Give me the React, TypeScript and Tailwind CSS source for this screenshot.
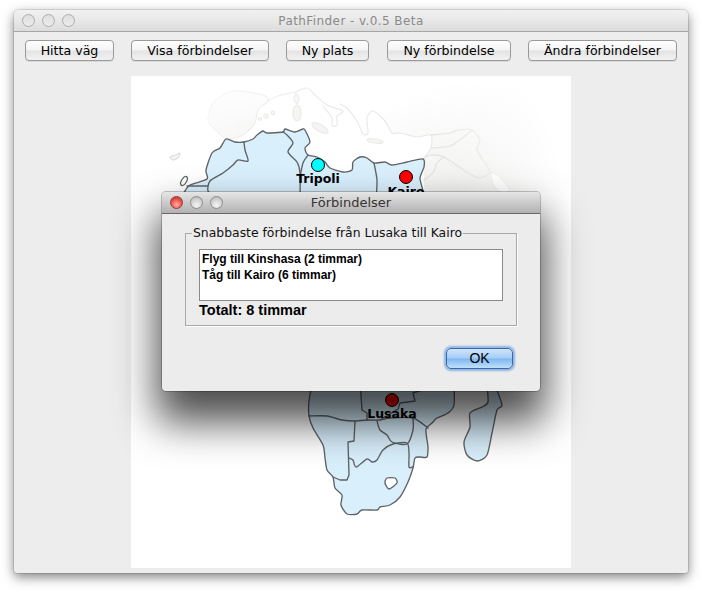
import React from "react";

const stroke = "#5f6366";

function smooth(pts: string, closed = false): string {
  const p = pts.trim().split(/\s+/).map(Number);
  const a: [number, number][] = [];
  for (let i = 0; i + 1 < p.length; i += 2) a.push([p[i], p[i + 1]]);
  const n = a.length;
  const at = (i: number) => (closed ? a[(i + n) % n] : a[Math.max(0, Math.min(n - 1, i))]);
  const k = 0.13;
  let d = `M${a[0][0]} ${a[0][1]}`;
  const last = closed ? n : n - 1;
  for (let i = 0; i < last; i++) {
    const p0 = at(i - 1);
    const p1 = at(i);
    const p2 = at(i + 1);
    const p3 = at(i + 2);
    const c1x = p1[0] + (p2[0] - p0[0]) * k;
    const c1y = p1[1] + (p2[1] - p0[1]) * k;
    const c2x = p2[0] - (p3[0] - p1[0]) * k;
    const c2y = p2[1] - (p3[1] - p1[1]) * k;
    d += `C${c1x.toFixed(1)} ${c1y.toFixed(1)} ${c2x.toFixed(1)} ${c2y.toFixed(1)} ${p2[0]} ${p2[1]}`;
  }
  return closed ? d + "Z" : d;
}

function Light({ color }: { color: "gray" | "red" | "blank" }) {
  const cls =
    color === "red"
      ? "border-[#8f3a3a] bg-[radial-gradient(circle_at_50%_70%,#ffb0a8_0%,#f05a52_50%,#c22a2a_100%)]"
      : color === "gray"
      ? "border-[#8e8e8e] bg-[radial-gradient(circle_at_50%_75%,#f4f4f4_0%,#d0d0d0_60%,#a8a8a8_100%)]"
      : "border-[#adadad] bg-[linear-gradient(#dedede,#ececec)]";
  return <div className={`w-[13px] h-[13px] rounded-full border ${cls}`} />;
}

function ToolButton({ label, width }: { label: string; width: string }) {
  return (
    <button
      className={`${width} h-[21px] rounded-[4px] border border-[#9a9a9a] bg-[linear-gradient(#ffffff,#f4f4f4_45%,#e4e4e4_55%,#f2f2f2)] text-[12.6px] leading-[19px] text-black font-['DejaVu_Sans',sans-serif] shadow-[0_1px_0_rgba(0,0,0,0.08)]`}
    >
      {label}
    </button>
  );
}

function MapDrawing() {
  return (
    <svg viewBox="131 76 440 492" width="440" height="492" className="block">
      <defs>
        <linearGradient id="wash" gradientUnits="userSpaceOnUse" x1="400" y1="100" x2="440" y2="195">
          <stop offset="0" stopColor="#ffffff" />
          <stop offset="1" stopColor="#f1f1f0" />
        </linearGradient>
        <linearGradient id="spain" gradientUnits="userSpaceOnUse" x1="240" y1="90" x2="230" y2="140">
          <stop offset="0" stopColor="#fcfcfc" />
          <stop offset="1" stopColor="#f4f4f3" />
        </linearGradient>
        <radialGradient id="fade" gradientUnits="userSpaceOnUse" cx="350" cy="205" r="215">
          <stop offset="0.5" stopColor="#fff" />
          <stop offset="1" stopColor="#000" />
        </radialGradient>
        <mask id="fadeMask" maskUnits="userSpaceOnUse" x="131" y="76" width="440" height="492">
          <rect x="131" y="76" width="440" height="492" fill="url(#fade)" />
        </mask>
      </defs>

      <g mask="url(#fadeMask)" stroke="#eaeae8" strokeWidth="1.2" strokeLinejoin="round" strokeLinecap="round">
        <path
          stroke="none"
          fill="url(#wash)"
          d="M268 101 L278 96 L295 92 L307 88 L316 96 L327 105 L343 111 L337 116 L337 125 L332 126 L332 118 L323 106 L316 98 L330 95 L347 108 L357 121 L363 134 L368 133 L367 118 L373 111 L385 121 L392 133 L400 133 L417 137 L431 135 L431 148 L424 158 L424 192 L571 192 L571 90 L420 84 L230 84 L233 91 L263 95 Z"
        />
        <path fill="url(#spain)" d={smooth("226 139 217 131 208 121 213 103 233 91 263 95 268 101 258 110 255 123 243 135", true)} />
        <path fill="none" d={smooth("268 101 278 96 295 92 307 88 316 96 327 105 343 111 337 116 337 125 332 126 332 118 323 106")} />
        <path fill="none" d={smooth("340 104 347 108 357 121 363 134 368 133 367 118 373 111 385 121 392 133 400 133 417 137 431 135 431 148 424 158")} />
        <ellipse cx="297" cy="113" rx="4" ry="8" fill="#f5f5f4" />
        <path d={smooth("296 93 299 98 297 104 294 99", true)} fill="#f7f7f6" />
        <ellipse cx="320" cy="128" rx="9" ry="3.5" transform="rotate(28 320 128)" fill="#f5f5f4" />
        <ellipse cx="375" cy="141" rx="8" ry="2" transform="rotate(8 375 141)" fill="#f5f5f4" />
        <circle cx="260" cy="119" r="1.5" fill="#f5f5f4" />
        <circle cx="266" cy="116" r="2.2" fill="#f5f5f4" />
        <circle cx="273" cy="113" r="1.8" fill="#f5f5f4" />
        <path fill="none" stroke="#e2e2e0" d={smooth("431 135 450 133 458 130 472 130 480 140 477 150 487 166 491 173")} />
        <path fill="none" stroke="#e2e2e0" d={smooth("424 158 431 155 444 157 468 173 480 178 491 173")} />
        <path fill="none" stroke="#e2e2e0" d={smooth("424 180 433 173 437 163 444 157")} />
        <path fill="none" stroke="#e2e2e0" d={smooth("431 148 450 146 465 136 472 130")} />
        <path fill="#ffffff" d={smooth("491 173 499 176 510 190 502 192 494 186", true)} />
      </g>

      <path d={smooth("176 155 180 153 178 158 173 160 170 157", true)} fill="#f5f5f5" stroke="#d6d6d6" />
      <ellipse cx="184" cy="181" rx="2.5" ry="5" transform="rotate(30 184 181)" fill="#fff" stroke={stroke} strokeWidth="1.3" />

      <g fill="#d9effc" stroke={stroke} strokeWidth="1.35" strokeLinejoin="round" strokeLinecap="round">
        <path d={smooth("180 200 185 191 190 185 207 179 206 170 212 153 220 148 226 139 235 142 244 142 253 139 257 135 263 131 267 133 283 132 285 129 295 132 303 129 305 130 310 142 305 148 308 155 317 157 325 162 330 168 343 172 352 170 353 162 360 157 367 158 374 163 385 162 392 165 407 162 423 159 424 167 420 178 423 191 423 200") + "Z"} />
        <path fill="none" d={smooth("244 142 245 150 248 161 238 160 233 165 223 173 210 181 208 191 215 196")} />
        <path fill="none" d="M187 186 L208 186" />
        <path fill="none" d={smooth("283 132 287 135 293 143 288 152 297 162 300 173 300 200")} />
        <path fill="none" d={smooth("308 155 303 163 300 177")} />
        <path fill="none" d={smooth("374 163 377 180 376 200")} />

        <path d={smooth("313 380 309 401 309 416 313 428 323 445 325 458 327 470 333 477 335 488 342 495 341 505 347 514 357 514 362 510 377 510 380 507 390 505 400 497 408 482 413 468 415 458 420 457 427 457 428 447 427 440 426 429 432 423 437 418 448 413 454 405 454 380") + "Z"} />
        <path fill="none" d={smooth("309 416 327 416 342 420 355 421 367 420")} />
        <path fill="none" d="M355 421 L354 441 L348 442 L349 475 L347 480 L340 480 L333 477" />
        <path fill="none" d={smooth("349 458 353 460 356 467 367 459 372 462 377 460 383 450 393 444 407 443 409 453 409 467 413 467")} />
        <path fill="none" d={smooth("377 421 380 430 387 435 392 442 407 444 413 430 413 418")} />
        <path fill="none" d={smooth("367 420 380 420 390 418 413 418 428 428")} />
        <path fill="none" d="M360 380 L362 410 L367 413 L367 420 M400 403 L415 401 L413 393 L422 390 M400 403 L398 409 L380 420" />
        <path d={smooth("387 478 395 478 397 483 389 489 385 483", true)} fill="#ffffff" />
        <path d={smooth("487 385 488 402 482 407 470 413 470 427 464 442 467 455 477 461 487 455 492 433 497 410 502 405 495 385") + "Z"} />
      </g>

      <circle cx="318" cy="165" r="6.5" fill="#00ffff" stroke="#000" />
      <circle cx="406" cy="177" r="6.5" fill="#ff0000" stroke="#000" />
      <circle cx="392" cy="400" r="6.5" fill="#ff0000" stroke="#000" />
      <g fontFamily="'DejaVu Sans', sans-serif" fontWeight="700" fontSize="12.5" textAnchor="middle" fill="#000">
        <text x="318" y="183">Tripoli</text>
        <text x="406" y="196">Kairo</text>
        <text x="392" y="418">Lusaka</text>
      </g>
    </svg>
  );
}

function Dialog() {
  return (
    <div className="absolute left-[148px] top-[182px] w-[378px] h-[199px] rounded-[4px] bg-[#ececec] flex flex-col shadow-[0_0_0_1px_rgba(0,0,0,0.22),0_26px_40px_5px_rgba(0,0,0,0.7)]">
      <div className="relative h-[22px] shrink-0 rounded-t-[4px] border-b border-[#686868] bg-[linear-gradient(#e6e6e6,#c6c6c6_60%,#b2b2b2)] flex items-center pl-[8px] gap-[7px]">
        <Light color="red" />
        <Light color="gray" />
        <Light color="gray" />
        <div className="absolute inset-0 flex items-center justify-center text-[13px] text-[#3a3230] font-['DejaVu_Sans',sans-serif]">
          Förbindelser
        </div>
      </div>
      <div className="flex-1 flex flex-col px-[23px] pt-[11px]">
        <fieldset className="h-[101px] border border-[#a8a8a8] px-[13px] pb-0 shadow-[1px_1px_0_#ffffff]">
          <legend className="ml-[-7px] px-[1px] text-[12.4px] leading-[16px] text-[#111] font-['DejaVu_Sans',sans-serif]">
            Snabbaste förbindelse från Lusaka till Kairo
          </legend>
          <div className="mt-[8px] h-[52px] border border-[#8a8a8a] bg-white pl-[2px] pt-[1px] text-[12px] leading-[16px] font-bold text-black font-['Liberation_Sans',sans-serif]">
            <div>Flyg till Kinshasa (2 timmar)</div>
            <div>Tåg till Kairo (6 timmar)</div>
          </div>
          <div className="text-[14.5px] leading-[18px] font-bold text-black font-['Liberation_Sans',sans-serif]">
            Totalt: 8 timmar
          </div>
        </fieldset>
        <div className="flex justify-end mt-[22px] pr-[4px]">
          <button className="w-[67px] h-[21px] rounded-[5px] border border-[#3a68a8] bg-[linear-gradient(#cfe4fb,#a5cdf6_48%,#7fb6f0_52%,#c0e0fb)] text-[14px] leading-[19px] text-black font-['Liberation_Sans',sans-serif] shadow-[0_0_2px_2px_rgba(90,150,225,0.65)]">
            OK
          </button>
        </div>
      </div>
    </div>
  );
}

export default function App() {
  return (
    <div className="w-[702px] h-[593px] bg-white overflow-hidden pt-[10px] pl-[14px]">
      <div className="relative w-[674px] h-[563px] rounded-t-[5px] rounded-b-[3px] bg-[#ededed] flex flex-col shadow-[0_0_0_1px_rgba(0,0,0,0.1),0_4px_12px_rgba(0,0,0,0.5)]">
        <div className="relative h-[22px] shrink-0 rounded-t-[5px] border-b border-[#a6a6a6] bg-[linear-gradient(#f1f1f1,#e8e8e8_50%,#dcdcdc)] flex items-center pl-[8px] gap-[7px]">
          <Light color="blank" />
          <Light color="blank" />
          <Light color="blank" />
          <div className="absolute inset-0 flex items-center justify-center text-[12px] tracking-[0.42px] text-[#8a8a8a] font-['DejaVu_Sans',sans-serif]">
            PathFinder - v.0.5 Beta
          </div>
        </div>
        <div className="flex gap-[17px] px-[11px] pt-[8px] shrink-0">
          <ToolButton label="Hitta väg" width="w-[89px]" />
          <ToolButton label="Visa förbindelser" width="w-[138px]" />
          <ToolButton label="Ny plats" width="w-[83px]" />
          <ToolButton label="Ny förbindelse" width="w-[124px] ml-[1px]" />
          <ToolButton label="Ändra förbindelser" width="w-[149px]" />
        </div>
        <div className="flex justify-center pt-[15px]">
          <div className="w-[440px] h-[492px] bg-white">
            <MapDrawing />
          </div>
        </div>
        <Dialog />
      </div>
    </div>
  );
}
